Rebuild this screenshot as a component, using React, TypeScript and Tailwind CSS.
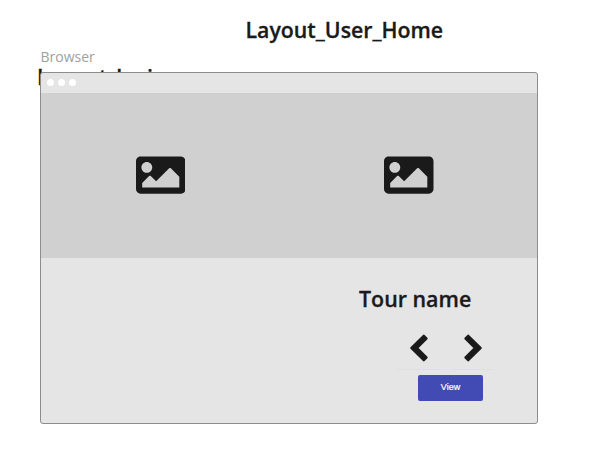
import React from "react";
import { FaImage } from "react-icons/fa";

function Chevron({ flipped = false }: { flipped?: boolean }) {
  return (
    <svg viewBox="0 0 18 28" className={flipped ? "h-7 w-[18px] -scale-x-100" : "h-7 w-[18px]"}>
      <path
        d="M1.8 14 13.8 2.2 16.1 4.5 6.6 14 16.1 23.5 13.8 25.8Z"
        fill="currentColor"
        stroke="currentColor"
        strokeWidth="3"
        strokeLinejoin="round"
      />
    </svg>
  );
}

function BrowserWindow() {
  return (
    <section className="relative mt-[5px] ml-10 flex h-[351.5px] w-[498px] flex-col overflow-hidden rounded-[3px] border border-[#8d8d8d] bg-[#e5e5e5]">
      <div className="flex h-5 shrink-0 items-center gap-[4px] pb-[1px] pl-[6px]">
        <span className="size-[7px] rounded-full bg-white" />
        <span className="size-[7px] rounded-full bg-white" />
        <span className="size-[7px] rounded-full bg-white" />
      </div>
      <div className="grid h-[165px] shrink-0 grid-cols-2 bg-[#d0d0d0]">
        <div className="flex items-center justify-center pr-[9px]">
          <FaImage viewBox="0 6 512 512" className="size-[49.5px]" />
        </div>
        <div className="flex items-center justify-center pr-2">
          <FaImage viewBox="0 6 512 512" className="size-[49.5px]" />
        </div>
      </div>
      <h2 className="mt-[26px] ml-[318px] text-[21.4px] leading-[30px] font-semibold whitespace-nowrap [-webkit-text-stroke:0.3px]">Tour name</h2>
      <div className="mt-[13px] ml-[356px] flex gap-[11px]">
        <button className="flex h-[43px] w-[43px] items-center justify-center border-b border-[#dfdfdf]">
          <Chevron />
        </button>
        <button className="flex h-[43px] w-[43px] items-center justify-center border-b border-[#dfdfdf]">
          <Chevron flipped />
        </button>
      </div>
      <button className="mt-[5px] ml-[377px] h-[26px] w-[65px] shrink-0 rounded-[2px] bg-[#424bb3] font-['Liberation_Sans',sans-serif] text-[9px] text-white [-webkit-text-stroke:0.2px]">
        View
      </button>
    </section>
  );
}

export default function App() {
  return (
    <main className="relative h-[463px] w-[593px] overflow-hidden bg-white font-['Open_Sans',sans-serif] text-[#1a1a1a]">
      <h1 className="pt-[15px] pl-[245.5px] text-[21.3px] leading-[30px] font-semibold whitespace-nowrap [-webkit-text-stroke:0.3px]">Layout_User_Home</h1>
      <p className="mt-[2px] ml-[40.5px] text-[14px] leading-5 text-[#a0a0a0]">Browser</p>
      <span className="absolute top-[62px] left-[37px] text-[21.3px] leading-[30px] font-semibold [-webkit-text-stroke:0.3px]">Layout_login</span>
      <BrowserWindow />
    </main>
  );
}
